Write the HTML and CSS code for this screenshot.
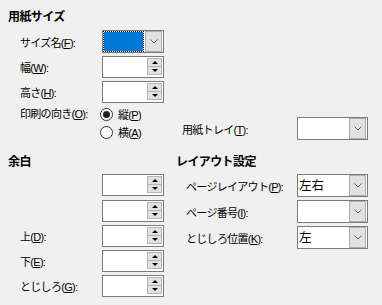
FILE: index.html
```html
<!DOCTYPE html>
<html lang="ja">
<head>
    <meta charset="UTF-8">
    <title>ページ設定</title>
    <link rel="stylesheet" href="styles.css">
</head>
<body>
    <div class="dialog">
        <div class="heading">用紙サイズ</div>

        <div class="row first">
            <span class="label">サイズ名(<u>F</u>):</span>
            <div class="combo small">
                <div class="value"><span class="sel"></span></div>
                <span class="drop"><svg width="8" height="5" viewBox="0 0 8 5"><polyline points="0.5,0.5 4,4 7.5,0.5" fill="none" stroke="#606060" stroke-width="1"/></svg></span>
            </div>
        </div>
        <div class="row">
            <span class="label">幅(<u>W</u>):</span>
            <div class="spin"><div class="field"></div><div class="btns"><span class="up"></span><span class="down"></span></div></div>
        </div>
        <div class="row">
            <span class="label">高さ(<u>H</u>):</span>
            <div class="spin"><div class="field"></div><div class="btns"><span class="up"></span><span class="down"></span></div></div>
        </div>

        <div class="orient">
            <span class="label orient-label">印刷の向き(<u>O</u>):</span>
            <div class="radios">
                <div class="radio"><span class="dot on"></span><span>縦(<u>P</u>)</span></div>
                <div class="radio"><span class="dot"></span><span>横(<u>A</u>)</span></div>
            </div>
            <div class="tray">
                <span class="tray-label">用紙トレイ(<u>T</u>):</span>
                <div class="combo wide">
                    <div class="value"></div>
                    <span class="drop"><svg width="8" height="5" viewBox="0 0 8 5"><polyline points="0.5,0.5 4,4 7.5,0.5" fill="none" stroke="#606060" stroke-width="1"/></svg></span>
                </div>
            </div>
        </div>

        <div class="columns">
            <div class="col-left">
                <div class="heading">余白</div>
                <div class="row m4">
                    <span class="label"></span>
                    <div class="spin"><div class="field"></div><div class="btns"><span class="up"></span><span class="down"></span></div></div>
                </div>
                <div class="row m4">
                    <span class="label"></span>
                    <div class="spin"><div class="field"></div><div class="btns"><span class="up"></span><span class="down"></span></div></div>
                </div>
                <div class="row">
                    <span class="label">上(<u>D</u>):</span>
                    <div class="spin"><div class="field"></div><div class="btns"><span class="up"></span><span class="down"></span></div></div>
                </div>
                <div class="row">
                    <span class="label">下(<u>E</u>):</span>
                    <div class="spin"><div class="field"></div><div class="btns"><span class="up"></span><span class="down"></span></div></div>
                </div>
                <div class="row">
                    <span class="label">とじしろ(<u>G</u>):</span>
                    <div class="spin"><div class="field"></div><div class="btns"><span class="up"></span><span class="down"></span></div></div>
                </div>
            </div>

            <div class="col-right">
                <div class="heading">レイアウト設定</div>
                <div class="row m4">
                    <span class="label-r">ページレイアウト(<u>P</u>):</span>
                    <div class="combo wide">
                        <div class="value">左右</div>
                        <span class="drop"><svg width="8" height="5" viewBox="0 0 8 5"><polyline points="0.5,0.5 4,4 7.5,0.5" fill="none" stroke="#606060" stroke-width="1"/></svg></span>
                    </div>
                </div>
                <div class="row">
                    <span class="label-r">ページ番号(<u>I</u>):</span>
                    <div class="combo wide">
                        <div class="value"></div>
                        <span class="drop"><svg width="8" height="5" viewBox="0 0 8 5"><polyline points="0.5,0.5 4,4 7.5,0.5" fill="none" stroke="#606060" stroke-width="1"/></svg></span>
                    </div>
                </div>
                <div class="row">
                    <span class="label-r">とじしろ位置(<u>K</u>):</span>
                    <div class="combo wide">
                        <div class="value">左</div>
                        <span class="drop"><svg width="8" height="5" viewBox="0 0 8 5"><polyline points="0.5,0.5 4,4 7.5,0.5" fill="none" stroke="#606060" stroke-width="1"/></svg></span>
                    </div>
                </div>
            </div>
        </div>
    </div>
</body>
</html>
```

FILE: styles.css
```css
body {
    margin: 0;
    background-color: #f0f0f0;
    color: #000;
    font-family: "Liberation Sans", "Noto Sans CJK JP", sans-serif;
    font-size: 11px;
    letter-spacing: -0.7px;
}

u {
    text-decoration: underline;
    text-underline-offset: 1px;
}

.dialog {
    padding: 9px 8px 0;
}

.heading {
    font-weight: bold;
    font-size: 12px;
    letter-spacing: -0.6px;
    height: 16px;
    line-height: 16px;
}

.row {
    display: flex;
    align-items: center;
    margin-top: 3px;
}

.row.first {
    margin-top: 5px;
}

.row.m4 {
    margin-top: 4px;
}

.label {
    width: 94px;
    padding-left: 12px;
    box-sizing: border-box;
    flex-shrink: 0;
}

.label-r {
    width: 121px;
    padding-left: 10px;
    box-sizing: border-box;
    flex-shrink: 0;
}

/* combo box */
.combo {
    display: flex;
    height: 23px;
    border: 1px solid #7a7a7a;
    background-color: #fff;
    box-sizing: border-box;
}

.combo.small {
    width: 62px;
}

.combo.wide {
    width: 71px;
}

.combo .value {
    flex: 1;
    display: flex;
    align-items: center;
    padding-left: 1px;
    line-height: 16px;
    font-size: 12.5px;
    letter-spacing: 0;
}

.combo.small .value {
    padding-left: 0;
    align-items: stretch;
}

.combo .sel {
    flex: 1;
    background-color: #0078d7;
    border: 1px dotted #000;
    background-clip: padding-box;
    margin-right: 1px;
}

.combo .drop {
    width: 17px;
    margin: 0 1px 0 0;
    border: 1px solid #adadad;
    background-color: #e1e1e1;
    box-sizing: border-box;
    display: flex;
    align-items: center;
    justify-content: center;
}

/* spin box */
.spin {
    display: flex;
    width: 62px;
    height: 22px;
    border: 1px solid #7a7a7a;
    background-color: #fff;
    box-sizing: border-box;
}

.spin .field {
    flex: 1;
}

.spin .btns {
    width: 15px;
    margin: 1px 1px 2px 0;
    display: flex;
    flex-direction: column;
}

.spin .btns span {
    flex: 1;
    background-color: #e1e1e1;
    border: 1px solid #b5b5b5;
    display: flex;
    align-items: center;
    justify-content: center;
}

.spin .btns .down {
    border-top: none;
}

.spin .up::before {
    content: "";
    border-left: 3px solid transparent;
    border-right: 3px solid transparent;
    border-bottom: 3px solid #000;
}

.spin .down::before {
    content: "";
    border-left: 3px solid transparent;
    border-right: 3px solid transparent;
    border-top: 3px solid #000;
}

/* orientation */
.orient {
    display: flex;
    margin-top: 2px;
}

.orient-label {
    width: 92px;
    line-height: 18px;
}

.radios {
    width: 82px;
}

.radio {
    display: flex;
    align-items: center;
    gap: 5px;
    height: 18px;
}

.dot {
    width: 13px;
    height: 13px;
    border: 1px solid #333;
    border-radius: 50%;
    background-color: #fff;
    box-sizing: border-box;
    display: flex;
    align-items: center;
    justify-content: center;
}

.dot.on::after {
    content: "";
    width: 7px;
    height: 7px;
    border-radius: 50%;
    background-color: #222;
}

.tray {
    display: flex;
    align-items: center;
    align-self: flex-end;
    margin-bottom: 1px;
}

.tray-label {
    width: 115px;
}

/* margins / layout section */
.columns {
    display: flex;
    margin-top: 13px;
}

.col-left {
    width: 168px;
}
```
